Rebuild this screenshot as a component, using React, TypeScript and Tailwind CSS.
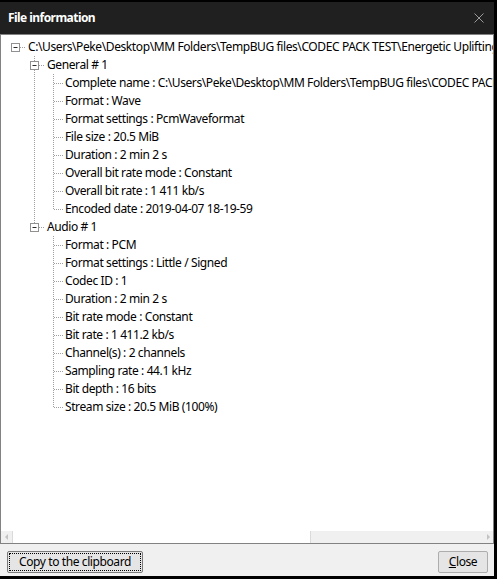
import type { ReactNode } from "react";

type TreeNode = { label: string; children?: TreeNode[] };

const fileInfo: TreeNode = {
  label:
    "C:\\Users\\Peke\\Desktop\\MM Folders\\TempBUG files\\CODEC PACK TEST\\Energetic Uplifting Corporate.wav",
  children: [
    {
      label: "General # 1",
      children: [
        {
          label:
            "Complete name : C:\\Users\\Peke\\Desktop\\MM Folders\\TempBUG files\\CODEC PACK TEST\\Energetic Uplifting Corporate.wav",
        },
        { label: "Format : Wave" },
        { label: "Format settings : PcmWaveformat" },
        { label: "File size : 20.5 MiB" },
        { label: "Duration : 2 min 2 s" },
        { label: "Overall bit rate mode : Constant" },
        { label: "Overall bit rate : 1 411 kb/s" },
        { label: "Encoded date : 2019-04-07 18-19-59" },
      ],
    },
    {
      label: "Audio # 1",
      children: [
        { label: "Format : PCM" },
        { label: "Format settings : Little / Signed" },
        { label: "Codec ID : 1" },
        { label: "Duration : 2 min 2 s" },
        { label: "Bit rate mode : Constant" },
        { label: "Bit rate : 1 411.2 kb/s" },
        { label: "Channel(s) : 2 channels" },
        { label: "Sampling rate : 44.1 kHz" },
        { label: "Bit depth : 16 bits" },
        { label: "Stream size : 20.5 MiB (100%)" },
      ],
    },
  ],
};

type Row = {
  label: string;
  depth: number;
  expandable: boolean;
  last: boolean;
  guides: boolean[];
};

function flatten(node: TreeNode, depth: number, last: boolean, guides: boolean[], out: Row[]) {
  out.push({ label: node.label, depth, expandable: Boolean(node.children?.length), last, guides });
  node.children?.forEach((child, i) => {
    const isLast = i === node.children!.length - 1;
    flatten(child, depth + 1, isLast, [...guides, depth > 0 && !last], out);
  });
  return out;
}

const LINE = "#a0a0a0";

function GuideCell({ on }: { on: boolean }) {
  return (
    <svg width="19" height="18" className="shrink-0">
      {on ? <line x1="9.5" y1="0" x2="9.5" y2="18" stroke={LINE} strokeDasharray="1 1" /> : null}
    </svg>
  );
}

function ConnectorCell({ row }: { row: Row }) {
  return (
    <svg width="19" height="18" className="shrink-0">
      {row.depth > 0 ? <line x1="9.5" y1="0" x2="9.5" y2="9" stroke={LINE} strokeDasharray="1 1" /> : null}
      {row.depth > 0 && !row.last ? (
        <line x1="9.5" y1="10" x2="9.5" y2="18" stroke={LINE} strokeDasharray="1 1" />
      ) : null}
      <line x1="10" y1="9.5" x2="19" y2="9.5" stroke={LINE} strokeDasharray="1 1" />
      {row.expandable ? (
        <>
          <rect x="5.5" y="5.5" width="8" height="8" fill="#ffffff" stroke="#919191" />
          <line x1="7.5" y1="9.5" x2="11.5" y2="9.5" stroke="#2b2b2b" />
        </>
      ) : null}
    </svg>
  );
}

function TreeRow({ row }: { row: Row }) {
  return (
    <div className="flex h-[18px] items-center whitespace-nowrap">
      {row.guides.map((on, i) => (
        <GuideCell key={i} on={on} />
      ))}
      <ConnectorCell row={row} />
      <span className={row.expandable ? "pl-[3px]" : "pl-[2px]"}>{row.label}</span>
    </div>
  );
}

function WinButton({ children, focused }: { children: ReactNode; focused?: boolean }) {
  return (
    <button
      type="button"
      className={
        focused
          ? "flex h-[22px] w-[136px] items-center rounded-[2px] border border-[#7a7a7a] bg-[#e5e5e5] p-[1px]"
          : "flex h-[22px] w-[50px] items-center rounded-[2px] border border-[#adadad] bg-[#e5e5e5] p-[1px]"
      }
    >
      <span
        className={
          focused
            ? "flex h-full w-full items-center justify-center border border-dotted border-black"
            : "flex h-full w-full items-center justify-center border border-transparent"
        }
      >
        {children}
      </span>
    </button>
  );
}

export default function App() {
  const rows = flatten(fileInfo, 0, true, [], []);

  return (
    <div
      className="flex h-[579px] w-[497px] flex-col bg-black pb-[3px] pr-[3px] pt-[2px] text-[12px] leading-none tracking-[-0.4px] text-black"
      style={{ fontFamily: '"Segoe UI", "Noto Sans", "Liberation Sans", sans-serif' }}
    >
      <div className="flex h-[32px] shrink-0 items-center justify-between bg-[#202020] pl-[8px] pr-[10px]">
        <span className="text-[12px] font-bold tracking-[-0.55px] text-white">File information</span>
        <svg width="10" height="10" viewBox="0 0 10 10">
          <path d="M0.5 0.5 L9.5 9.5 M9.5 0.5 L0.5 9.5" stroke="#9a9a9a" strokeWidth="1" />
        </svg>
      </div>

      <div className="flex min-h-0 flex-1 flex-col border border-[#828282] bg-white">
        <div className="min-h-0 flex-1 overflow-hidden pl-[5px] pt-[3px]">
          {rows.map((row, i) => (
            <TreeRow key={i} row={row} />
          ))}
        </div>
        <div className="flex h-[12px] shrink-0 bg-[#f0f0f0]">
          <div className="flex w-[11px] items-center justify-center">
            <svg width="4" height="6" viewBox="0 0 4 6">
              <path d="M3 0 L0 3 L3 6 Z" fill="#c2c2c2" />
            </svg>
          </div>
          <div className="w-[299px] border-x border-[#dadada] bg-white" />
          <div className="flex-1" />
          <div className="flex w-[11px] items-center justify-center">
            <svg width="4" height="6" viewBox="0 0 4 6">
              <path d="M1 0 L4 3 L1 6 Z" fill="#c2c2c2" />
            </svg>
          </div>
        </div>
      </div>

      <div className="flex h-[32px] shrink-0 items-center justify-between bg-[#f0f0f0] pl-[7px] pr-[6px] pt-[4px]">
        <WinButton focused>Copy to the clipboard</WinButton>
        <WinButton>
          <span>
            <span className="underline">C</span>lose
          </span>
        </WinButton>
      </div>
    </div>
  );
}
